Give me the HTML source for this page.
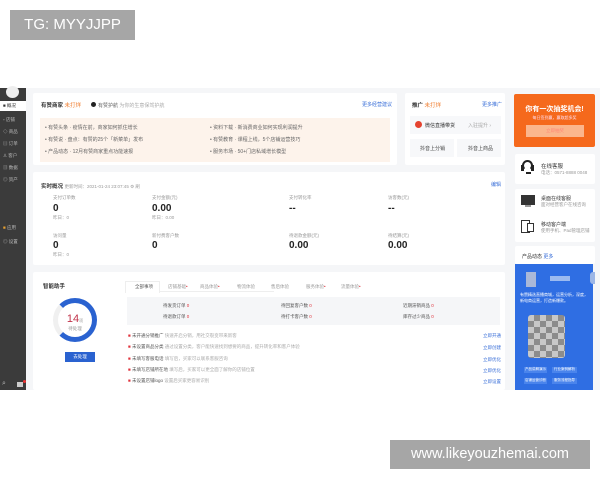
<!DOCTYPE html>
<html><head><meta charset="utf-8"><style>
*{margin:0;padding:0;box-sizing:border-box}
body{width:600px;height:480px;background:#fff;position:relative;overflow:hidden;font-family:"Liberation Sans","Noto Sans CJK SC",sans-serif;color:#333}
.a{position:absolute}
.t{font-size:5px;color:#666;white-space:nowrap}
.b{font-size:5.5px;color:#333;font-weight:bold;white-space:nowrap}
.card{position:absolute;background:#fff;border-radius:2px}
.n{font-size:10px;font-weight:bold;color:#222}
.l{font-size:4.5px;color:#999;white-space:nowrap}
.blue{color:#3a6fd8}
.red{color:#e0333c}
.side{font-size:4.5px;color:#bbb;white-space:nowrap}
</style></head><body>
<div class="a" style="left:10px;top:10px;width:125px;height:30px;background:#a6a6a6;color:#fff;font-size:15px;line-height:30px;text-align:center">TG: MYYJJPP</div>
<div class="a" style="left:390px;top:440px;width:200px;height:29px;background:#a6a6a6;color:#fff;font-size:14.5px;line-height:29px;text-align:center">www.likeyouzhemai.com</div>

<div class="a" style="left:0;top:88px;width:600px;height:302px;background:#f5f6f8"></div>
<div class="a" style="left:0;top:88px;width:26px;height:302px;background:#3b3b3b"></div>
<div class="a" style="left:6px;top:86px;width:13px;height:12px;border-radius:50%;background:#eee"></div>
<div class="a" style="left:0;top:101px;width:26px;height:10px;background:#fff"></div>
<div class="a side" style="left:3px;top:103px;color:#333">■ 概况</div>
<div class="a side" style="left:3px;top:117px">▫ 店铺</div>
<div class="a side" style="left:3px;top:129px">◇ 商品</div>
<div class="a side" style="left:3px;top:141px">▤ 订单</div>
<div class="a side" style="left:3px;top:153px">♙ 客户</div>
<div class="a side" style="left:3px;top:165px">▥ 数据</div>
<div class="a side" style="left:3px;top:177px">◎ 资产</div>
<div class="a side" style="left:3px;top:225px"><span style="color:#e8a030">■</span> 应用</div>
<div class="a side" style="left:3px;top:239px">◎ 设置</div>
<div class="a side" style="left:2px;top:380px;font-size:7px">⌕</div>
<div class="a" style="left:17px;top:382px;width:6px;height:5px;background:#ccc"></div>
<div class="a" style="left:23px;top:380px;width:3px;height:3px;border-radius:50%;background:#e33"></div>

<div class="card" style="left:33px;top:93px;width:364px;height:72px"></div>
<div class="a b" style="left:41px;top:101px">有赞商家 <span style="color:#f07a2a;font-weight:normal">未打烊</span></div>
<div class="a" style="left:91px;top:102px;width:5px;height:5px;border-radius:50%;background:#222"></div>
<div class="a t" style="left:98px;top:102px">有赞护航 <span style="color:#aaa">为你的生意保驾护航</span></div>
<div class="a t blue" style="left:362px;top:101px">更多经营建议</div>
<div class="a" style="left:40px;top:118px;width:350px;height:44px;background:#fdf3eb"></div>
<div class="a t" style="left:45px;top:124px">• 有赞头条 · 疫情在前，商家如何抓住增长</div>
<div class="a t" style="left:45px;top:136px">• 有赞说 · 盘点：有赞的25个「新菜单」发布</div>
<div class="a t" style="left:45px;top:148px">• 产品动态 · 12月有赞商家重点功能速报</div>
<div class="a t" style="left:210px;top:124px">• 资料下载 · 新消费商业如何实现利润提升</div>
<div class="a t" style="left:210px;top:136px">• 有赞教育 · 课程上线，5个店铺运营技巧</div>
<div class="a t" style="left:210px;top:148px">• 服务市场 · 50+门店私域增长模型</div>

<div class="card" style="left:405px;top:93px;width:100px;height:72px"></div>
<div class="a b" style="left:412px;top:101px">推广 <span style="color:#f07a2a;font-weight:normal">未打烊</span></div>
<div class="a t blue" style="left:482px;top:101px">更多推广</div>
<div class="a" style="left:410px;top:116px;width:91px;height:18px;background:#f7f8fa"></div>
<div class="a" style="left:415px;top:121px;width:7px;height:7px;border-radius:50%;background:#e5432f"></div>
<div class="a t" style="left:425px;top:122px;color:#333">微信直播带货</div>
<div class="a t" style="left:468px;top:122px;color:#aaa">入驻提升 ›</div>
<div class="a" style="left:410px;top:139px;width:44px;height:18px;background:#f7f8fa"></div>
<div class="a" style="left:457px;top:139px;width:44px;height:18px;background:#f7f8fa"></div>
<div class="a t" style="left:420px;top:145px;color:#444">抖音上分销</div>
<div class="a t" style="left:468px;top:145px;color:#444">抖音上商品</div>

<div class="a" style="left:514px;top:94px;width:81px;height:53px;background:#f5691c;border-radius:2px"></div>
<div class="a" style="left:514px;top:104px;width:81px;text-align:center;color:#fff;font-size:7px;font-weight:bold">你有一次抽奖机会!</div>
<div class="a" style="left:514px;top:115px;width:81px;text-align:center;color:#fde;font-size:4px">每日签到赢，赢取超多奖</div>
<div class="a" style="left:526px;top:125px;width:58px;height:12px;background:#fbb68c"></div>
<div class="a" style="left:526px;top:128px;width:58px;text-align:center;color:#f87;font-size:4.5px">立即抽奖</div>

<div class="card" style="left:515px;top:154px;width:80px;height:30px"></div>
<div class="a" style="left:522px;top:160px;width:11px;height:11px;border:2px solid #222;border-bottom-color:transparent;border-radius:50%"></div>
<div class="a" style="left:521px;top:165px;width:3px;height:6px;background:#222"></div>
<div class="a" style="left:531px;top:165px;width:3px;height:6px;background:#222"></div>
<div class="a" style="left:526px;top:172px;width:5px;height:2px;background:#222"></div>
<div class="a b" style="left:541px;top:162px;font-weight:normal;color:#333">在线客服</div>
<div class="a l" style="left:541px;top:170px">电话：0571-8888 0048</div>
<div class="card" style="left:515px;top:189px;width:80px;height:53px"></div>
<div class="a" style="left:521px;top:195px;width:14px;height:10px;background:#333"></div>
<div class="a" style="left:525px;top:205px;width:6px;height:2px;background:#999"></div>
<div class="a t" style="left:541px;top:195px;color:#333">桌面在线客服</div>
<div class="a l" style="left:541px;top:202px">面对经营客户在线咨询</div>
<div class="a" style="left:521px;top:220px;width:9px;height:13px;border:1px solid #333"></div>
<div class="a" style="left:527px;top:223px;width:7px;height:9px;border:1px solid #333;background:#fff"></div>
<div class="a t" style="left:541px;top:221px;color:#333">移动客户端</div>
<div class="a l" style="left:541px;top:228px">使用手机、Pad管理店铺</div>
<div class="card" style="left:515px;top:246px;width:80px;height:18px"></div>
<div class="a t" style="left:522px;top:253px;color:#333">产品动态 <span class="blue">更多</span></div>
<div class="a" style="left:515px;top:264px;width:78px;height:126px;background:#2f6ee3"></div>
<div class="a" style="left:526px;top:272px;width:10px;height:15px;background:#aab8d8"></div>
<div class="a" style="left:550px;top:276px;width:20px;height:5px;background:#9bbaf0"></div>
<div class="a" style="left:590px;top:272px;width:5px;height:12px;background:#9cb6e6;border-radius:3px 0 0 3px"></div>
<div class="a" style="left:520px;top:292px;width:70px;font-size:4px;color:#fff;line-height:5.5px">有赞精选直播商城，运营分析，深度，新电商运营，打造新爆款。</div>
<div class="a" style="left:528px;top:315px;width:37px;height:43px;background:repeating-conic-gradient(#8c8c8c 0 25%,#c8c8c8 0 50%) 0 0/12px 12px;border-radius:3px"></div>
<div class="a" style="left:524px;top:367px;width:23px;height:6px;background:#4a84ec;font-size:3.5px;color:#fff;text-align:center">产品讲解演示</div>
<div class="a" style="left:552px;top:367px;width:25px;height:6px;background:#4a84ec;font-size:3.5px;color:#fff;text-align:center">行业案例解析</div>
<div class="a" style="left:524px;top:378px;width:23px;height:6px;background:#4a84ec;font-size:3.5px;color:#fff;text-align:center">店铺运营诊断</div>
<div class="a" style="left:552px;top:378px;width:25px;height:6px;background:#4a84ec;font-size:3.5px;color:#fff;text-align:center">服务流程指导</div>

<div class="card" style="left:33px;top:172px;width:472px;height:93px"></div>
<div class="a b" style="left:41px;top:182px">实时概况 <span class="l" style="font-weight:normal">更新时间：2021-01-24 23:07:45 ⚙ 刷</span></div>
<div class="a t blue" style="left:491px;top:181px">编辑</div>
<div class="a l" style="left:53px;top:195px">支付订单数</div>
<div class="a n" style="left:53px;top:203px">0</div>
<div class="a l" style="left:53px;top:215px">昨日：0</div>
<div class="a l" style="left:152px;top:195px">支付金额(元)</div>
<div class="a n" style="left:152px;top:203px">0.00</div>
<div class="a l" style="left:152px;top:215px">昨日：0.00</div>
<div class="a l" style="left:289px;top:195px">支付转化率</div>
<div class="a n" style="left:289px;top:203px">--</div>
<div class="a l" style="left:388px;top:195px">访客数(元)</div>
<div class="a n" style="left:388px;top:203px">--</div>
<div class="a l" style="left:53px;top:233px">访问量</div>
<div class="a n" style="left:53px;top:240px">0</div>
<div class="a l" style="left:53px;top:252px">昨日：0</div>
<div class="a l" style="left:152px;top:233px">新付费客户数</div>
<div class="a n" style="left:152px;top:240px">0</div>
<div class="a l" style="left:289px;top:233px">待退款金额(元)</div>
<div class="a n" style="left:289px;top:240px">0.00</div>
<div class="a l" style="left:388px;top:233px">待结算(元)</div>
<div class="a n" style="left:388px;top:240px">0.00</div>

<div class="card" style="left:33px;top:272px;width:472px;height:118px"></div>
<div class="a b" style="left:43px;top:282px">智能助手</div>
<div class="a" style="left:53px;top:298px;width:44px;height:44px;border-radius:50%;border:5px solid #2a62d0;border-left-color:#f0f0f0"></div>
<div class="a" style="left:53px;top:313px;width:44px;text-align:center;font-size:11px;color:#c0334a">14<span style="font-size:4px;color:#999">项</span></div>
<div class="a l" style="left:53px;top:326px;width:44px;text-align:center">待处理</div>
<div class="a" style="left:65px;top:352px;width:30px;height:10px;background:#2a62d0;color:#fff;font-size:4.5px;text-align:center;line-height:10px">去处理</div>
<div class="a" style="left:127px;top:282px;width:147px;height:10px;border-bottom:1px solid #eee"></div>
<div class="a" style="left:125px;top:281px;width:35px;height:12px;background:#fff;border:1px solid #eee;border-bottom:none"></div>
<div class="a l" style="left:135px;top:284px;color:#555">全部事项</div>
<div class="a l" style="left:168px;top:284px">店铺基础<span class="red">•</span></div>
<div class="a l" style="left:200px;top:284px">商品体验<span class="red">•</span></div>
<div class="a l" style="left:237px;top:284px">物流体验</div>
<div class="a l" style="left:271px;top:284px">售后体验</div>
<div class="a l" style="left:306px;top:284px">服务体验<span class="red">•</span></div>
<div class="a l" style="left:341px;top:284px">流量体验<span class="red">•</span></div>
<div class="a" style="left:127px;top:297px;width:373px;height:28px;background:#f5f6f8"></div>
<div class="a l" style="left:163px;top:303px;color:#555">待发货订单 <span class="red">0</span></div>
<div class="a l" style="left:163px;top:314px;color:#555">待退款订单 <span class="red">0</span></div>
<div class="a l" style="left:281px;top:303px;color:#555">待回复客户数 <span class="red">0</span></div>
<div class="a l" style="left:281px;top:314px;color:#555">待打卡客户数 <span class="red">0</span></div>
<div class="a l" style="left:403px;top:303px;color:#555">近期滞销商品 <span class="red">0</span></div>
<div class="a l" style="left:403px;top:314px;color:#555">库存过少商品 <span class="red">0</span></div>
<div class="a l" style="left:128px;top:333px;color:#555"><span class="red">■</span> 未开通分销推广 <span style="color:#aaa">快速开启分销，用社交裂变带来新客</span></div>
<div class="a l" style="left:128px;top:344px;color:#555"><span class="red">■</span> 未设置商品分类 <span style="color:#aaa">通过设置分类，客户能快速找到想要的商品，提升转化率和客户体验</span></div>
<div class="a l" style="left:128px;top:356px;color:#555"><span class="red">■</span> 未填写客服电话 <span style="color:#aaa">填写后，买家可以联系客服咨询</span></div>
<div class="a l" style="left:128px;top:367px;color:#555"><span class="red">■</span> 未填写店铺所在地 <span style="color:#aaa">填写后，买家可以更全面了解你的店铺位置</span></div>
<div class="a l" style="left:128px;top:378px;color:#555"><span class="red">■</span> 未设置店铺logo <span style="color:#aaa">设置后买家更容易识别</span></div>
<div class="a l blue" style="left:483px;top:333px">立即开通</div>
<div class="a l blue" style="left:483px;top:345px">立即创建</div>
<div class="a l blue" style="left:483px;top:357px">立即优化</div>
<div class="a l blue" style="left:483px;top:368px">立即优化</div>
<div class="a l blue" style="left:483px;top:379px">立即设置</div>
</body></html>
